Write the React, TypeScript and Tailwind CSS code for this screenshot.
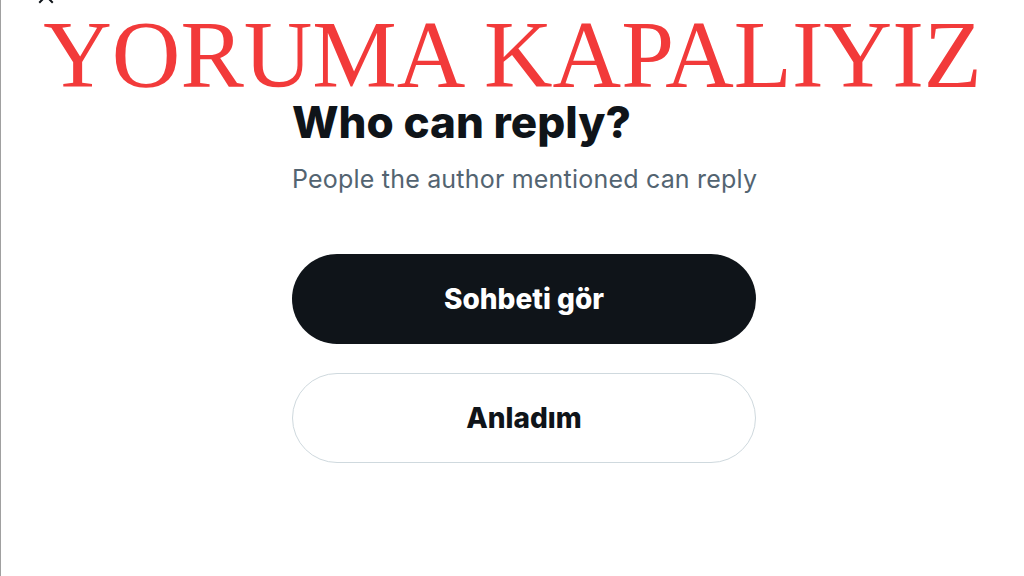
import React from "react";

const App: React.FC = () => {
  return (
    <section className="relative w-[1024px] h-[576px] overflow-hidden bg-white border-l border-[#a0a0a0]">
      {/* close icon, mostly scrolled off the top */}
      <svg
        viewBox="0 0 24 24"
        className="absolute left-[33px] top-[-16px] w-[24px] h-[24px] text-[#0f1419]"
        fill="currentColor"
      >
        <path d="M10.59 12L4.54 5.96l1.42-1.42L12 10.59l6.04-6.05 1.42 1.42L13.41 12l6.05 6.04-1.42 1.42L12 13.41l-6.04 6.05-1.42-1.42L10.59 12z" />
      </svg>

      <h2 className="pt-[13px] text-center text-[95px] leading-[84px] text-[#f23a3a] font-['Liberation_Serif',serif] whitespace-nowrap">
        YORUMA KAPALIYIZ
      </h2>

      <div className="ml-[291px] w-[464px] flex flex-col font-['Inter',sans-serif]">
        <h1 className="mt-[1px] text-[44px] leading-[48px] font-extrabold text-[#0f1419] whitespace-nowrap">
          Who can reply?
        </h1>
        <p className="mt-[17px] text-[25px] tracking-[0.2px] leading-[32px] text-[#536471] whitespace-nowrap">
          People the author mentioned can reply
        </p>

        <div className="mt-[59px] flex flex-col gap-[29px]">
          <button
            type="button"
            className="h-[90px] w-full rounded-full bg-[#0f1419] text-white text-[28px] font-extrabold"
          >
            Sohbeti gör
          </button>
          <button
            type="button"
            className="h-[90px] w-full rounded-full border border-[#cfd9de] bg-white text-[#0f1419] text-[28px] font-extrabold"
          >
            Anladım
          </button>
        </div>
      </div>
    </section>
  );
};

export default App;
